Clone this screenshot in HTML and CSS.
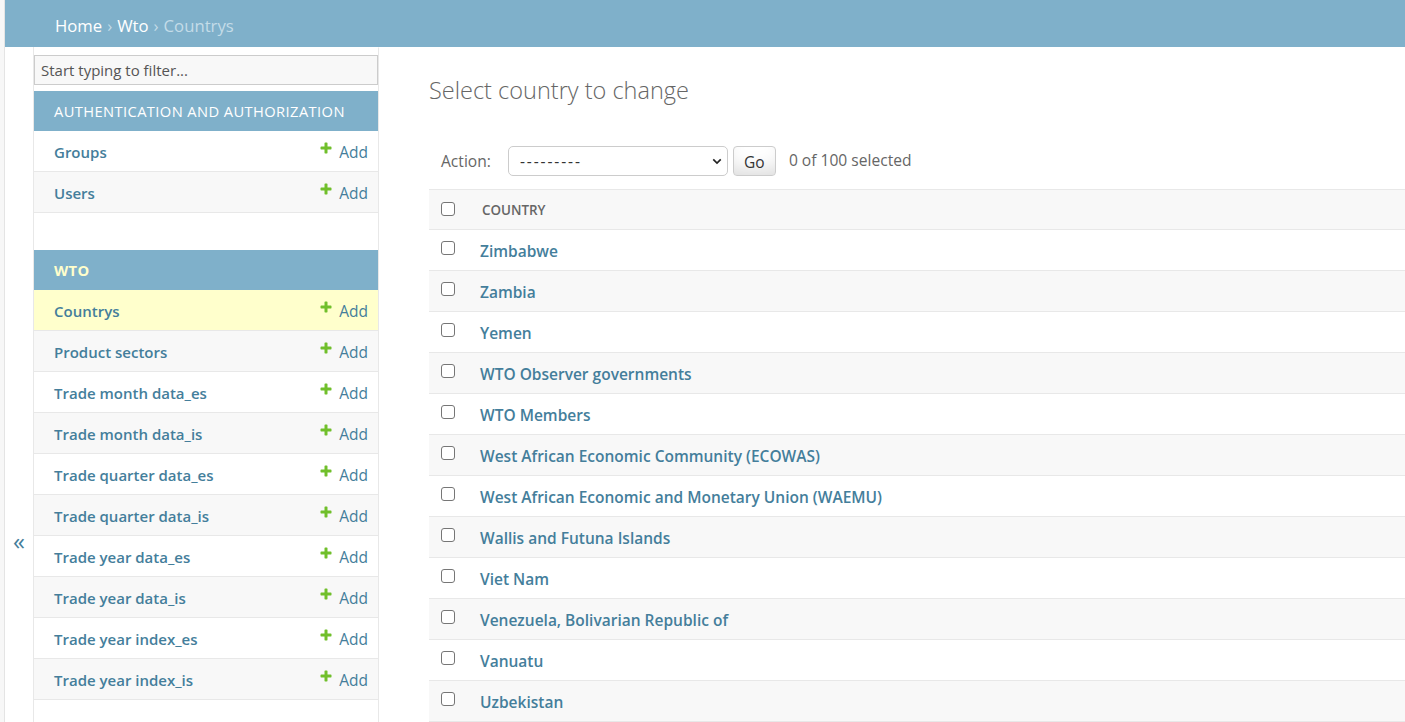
FILE: index.html
```html
<!DOCTYPE html>
<html lang="en">
<head>
<meta charset="utf-8">
<title>Select country to change | Django site admin</title>
<link rel="stylesheet" href="styles.css">
</head>
<body>
<div class="page">
  <nav class="breadcrumbs">
    <a href="#">Home</a><span class="sep">›</span><a href="#">Wto</a><span class="sep">›</span><span>Countrys</span>
  </nav>
  <div class="main">
    <button class="toggle-nav" type="button" aria-label="Toggle navigation">«</button>
    <nav class="sidebar">
      <input class="nav-filter" type="search" placeholder="Start typing to filter...">
      <div class="module">
        <div class="caption">Authentication and Authorization</div>
        <div class="row"><a class="model" href="#">Groups</a><a class="addlink" href="#"><svg viewBox="0 0 1792 1792"><path d="M1600 796v192q0 40-28 68t-68 28h-416v416q0 40-28 68t-68 28h-192q-40 0-68-28t-28-68v-416h-416q-40 0-68-28t-28-68v-192q0-40 28-68t68-28h416v-416q0-40 28-68t68-28h192q40 0 68 28t28 68v416h416q40 0 68 28t28 68z"/></svg>Add</a></div>
        <div class="row alt"><a class="model" href="#">Users</a><a class="addlink" href="#"><svg viewBox="0 0 1792 1792"><path d="M1600 796v192q0 40-28 68t-68 28h-416v416q0 40-28 68t-68 28h-192q-40 0-68-28t-28-68v-416h-416q-40 0-68-28t-28-68v-192q0-40 28-68t68-28h416v-416q0-40 28-68t68-28h192q40 0 68 28t28 68v416h416q40 0 68 28t28 68z"/></svg>Add</a></div>
      </div>
      <div class="module">
        <div class="caption current">WTO</div>
        <div class="row current-model"><a class="model" href="#">Countrys</a><a class="addlink" href="#"><svg viewBox="0 0 1792 1792"><path d="M1600 796v192q0 40-28 68t-68 28h-416v416q0 40-28 68t-68 28h-192q-40 0-68-28t-28-68v-416h-416q-40 0-68-28t-28-68v-192q0-40 28-68t68-28h416v-416q0-40 28-68t68-28h192q40 0 68 28t28 68v416h416q40 0 68 28t28 68z"/></svg>Add</a></div>
        <div class="row alt"><a class="model" href="#">Product sectors</a><a class="addlink" href="#"><svg viewBox="0 0 1792 1792"><path d="M1600 796v192q0 40-28 68t-68 28h-416v416q0 40-28 68t-68 28h-192q-40 0-68-28t-28-68v-416h-416q-40 0-68-28t-28-68v-192q0-40 28-68t68-28h416v-416q0-40 28-68t68-28h192q40 0 68 28t28 68v416h416q40 0 68 28t28 68z"/></svg>Add</a></div>
        <div class="row"><a class="model" href="#">Trade month data_es</a><a class="addlink" href="#"><svg viewBox="0 0 1792 1792"><path d="M1600 796v192q0 40-28 68t-68 28h-416v416q0 40-28 68t-68 28h-192q-40 0-68-28t-28-68v-416h-416q-40 0-68-28t-28-68v-192q0-40 28-68t68-28h416v-416q0-40 28-68t68-28h192q40 0 68 28t28 68v416h416q40 0 68 28t28 68z"/></svg>Add</a></div>
        <div class="row alt"><a class="model" href="#">Trade month data_is</a><a class="addlink" href="#"><svg viewBox="0 0 1792 1792"><path d="M1600 796v192q0 40-28 68t-68 28h-416v416q0 40-28 68t-68 28h-192q-40 0-68-28t-28-68v-416h-416q-40 0-68-28t-28-68v-192q0-40 28-68t68-28h416v-416q0-40 28-68t68-28h192q40 0 68 28t28 68v416h416q40 0 68 28t28 68z"/></svg>Add</a></div>
        <div class="row"><a class="model" href="#">Trade quarter data_es</a><a class="addlink" href="#"><svg viewBox="0 0 1792 1792"><path d="M1600 796v192q0 40-28 68t-68 28h-416v416q0 40-28 68t-68 28h-192q-40 0-68-28t-28-68v-416h-416q-40 0-68-28t-28-68v-192q0-40 28-68t68-28h416v-416q0-40 28-68t68-28h192q40 0 68 28t28 68v416h416q40 0 68 28t28 68z"/></svg>Add</a></div>
        <div class="row alt"><a class="model" href="#">Trade quarter data_is</a><a class="addlink" href="#"><svg viewBox="0 0 1792 1792"><path d="M1600 796v192q0 40-28 68t-68 28h-416v416q0 40-28 68t-68 28h-192q-40 0-68-28t-28-68v-416h-416q-40 0-68-28t-28-68v-192q0-40 28-68t68-28h416v-416q0-40 28-68t68-28h192q40 0 68 28t28 68v416h416q40 0 68 28t28 68z"/></svg>Add</a></div>
        <div class="row"><a class="model" href="#">Trade year data_es</a><a class="addlink" href="#"><svg viewBox="0 0 1792 1792"><path d="M1600 796v192q0 40-28 68t-68 28h-416v416q0 40-28 68t-68 28h-192q-40 0-68-28t-28-68v-416h-416q-40 0-68-28t-28-68v-192q0-40 28-68t68-28h416v-416q0-40 28-68t68-28h192q40 0 68 28t28 68v416h416q40 0 68 28t28 68z"/></svg>Add</a></div>
        <div class="row alt"><a class="model" href="#">Trade year data_is</a><a class="addlink" href="#"><svg viewBox="0 0 1792 1792"><path d="M1600 796v192q0 40-28 68t-68 28h-416v416q0 40-28 68t-68 28h-192q-40 0-68-28t-28-68v-416h-416q-40 0-68-28t-28-68v-192q0-40 28-68t68-28h416v-416q0-40 28-68t68-28h192q40 0 68 28t28 68v416h416q40 0 68 28t28 68z"/></svg>Add</a></div>
        <div class="row"><a class="model" href="#">Trade year index_es</a><a class="addlink" href="#"><svg viewBox="0 0 1792 1792"><path d="M1600 796v192q0 40-28 68t-68 28h-416v416q0 40-28 68t-68 28h-192q-40 0-68-28t-28-68v-416h-416q-40 0-68-28t-28-68v-192q0-40 28-68t68-28h416v-416q0-40 28-68t68-28h192q40 0 68 28t28 68v416h416q40 0 68 28t28 68z"/></svg>Add</a></div>
        <div class="row alt"><a class="model" href="#">Trade year index_is</a><a class="addlink" href="#"><svg viewBox="0 0 1792 1792"><path d="M1600 796v192q0 40-28 68t-68 28h-416v416q0 40-28 68t-68 28h-192q-40 0-68-28t-28-68v-416h-416q-40 0-68-28t-28-68v-192q0-40 28-68t68-28h416v-416q0-40 28-68t68-28h192q40 0 68 28t28 68v416h416q40 0 68 28t28 68z"/></svg>Add</a></div>
      </div>
    </nav>
    <main class="content">
      <h1>Select country to change</h1>
      <div class="actions">
        <label class="action-label">Action:</label>
        <span class="select-wrap">
          <select class="action-select"><option>---------</option><option>Delete selected countrys</option></select>
          <svg class="chevron" viewBox="0 0 12 8"><path d="M1.5 1.5 6 6l4.5-4.5" fill="none" stroke="#222" stroke-width="2"/></svg>
        </span>
        <button class="go" type="button">Go</button>
        <span class="counter">0 of 100 selected</span>
      </div>
      <table class="results">
        <thead>
          <tr><th class="cb"><input type="checkbox"></th><th class="col">Country</th></tr>
        </thead>
        <tbody>
          <tr><td class="cb"><input type="checkbox"></td><th><a href="#">Zimbabwe</a></th></tr>
          <tr class="alt"><td class="cb"><input type="checkbox"></td><th><a href="#">Zambia</a></th></tr>
          <tr><td class="cb"><input type="checkbox"></td><th><a href="#">Yemen</a></th></tr>
          <tr class="alt"><td class="cb"><input type="checkbox"></td><th><a href="#">WTO Observer governments</a></th></tr>
          <tr><td class="cb"><input type="checkbox"></td><th><a href="#">WTO Members</a></th></tr>
          <tr class="alt"><td class="cb"><input type="checkbox"></td><th><a href="#">West African Economic Community (ECOWAS)</a></th></tr>
          <tr><td class="cb"><input type="checkbox"></td><th><a href="#">West African Economic and Monetary Union (WAEMU)</a></th></tr>
          <tr class="alt"><td class="cb"><input type="checkbox"></td><th><a href="#">Wallis and Futuna Islands</a></th></tr>
          <tr><td class="cb"><input type="checkbox"></td><th><a href="#">Viet Nam</a></th></tr>
          <tr class="alt"><td class="cb"><input type="checkbox"></td><th><a href="#">Venezuela, Bolivarian Republic of</a></th></tr>
          <tr><td class="cb"><input type="checkbox"></td><th><a href="#">Vanuatu</a></th></tr>
          <tr class="alt"><td class="cb"><input type="checkbox"></td><th><a href="#">Uzbekistan</a></th></tr>
        </tbody>
      </table>
    </main>
  </div>
</div>
</body>
</html>
```
FILE: styles.css
```css
html {
  overflow: hidden;
}
body {
  margin: 0;
  padding: 0 0 0 4px;
  background: #f7f7f7;
  font-family: "Open Sans", "Noto Sans", "DejaVu Sans", sans-serif;
  color: #333;
  font-size: 15px;
}
a {
  text-decoration: none;
  color: #447e9b;
}
.page {
  background: #fff;
  border-left: 1px solid #e4e4e4;
  min-height: 100vh;
}
.breadcrumbs {
  background: #7fb0ca;
  color: #c4dce8;
  height: 47px;
  box-sizing: border-box;
  padding: 4px 50px 0;
  display: flex;
  align-items: center;
  font-size: 16.7px;
}
.breadcrumbs a {
  color: #fff;
}
.breadcrumbs .sep {
  margin: 0 5px;
}
.main {
  display: flex;
  min-height: calc(100vh - 47px);
}
.toggle-nav {
  flex: 0 0 29px;
  width: 29px;
  box-sizing: border-box;
  border: 0;
  border-right: 1px solid #e8e8e8;
  background: #fff;
  color: #447e9b;
  font-family: "Open Sans", sans-serif;
  font-size: 24px;
  padding: 479px 0 0;
  display: flex;
  justify-content: center;
  align-items: flex-start;
  line-height: 30px;
}
.sidebar {
  flex: 0 0 344px;
  border-right: 1px solid #e8e8e8;
  border-top: 1px solid transparent;
}
.nav-filter {
  display: block;
  width: 100%;
  box-sizing: border-box;
  height: 30px;
  margin: 7px 0 6px;
  padding: 2px 6px;
  border: 1px solid #ccc;
  background: #f8f8f8;
  color: #333;
  font-family: inherit;
  font-size: 15px;
  outline: none;
}
.nav-filter::placeholder {
  color: #555;
}
.module {
  margin-bottom: 37px;
}
.caption {
  background: #7fb0ca;
  color: #fff;
  text-transform: uppercase;
  letter-spacing: 0.4px;
  font-size: 14.7px;
  line-height: 20px;
  padding: 10px 20px;
}
.caption.current {
  color: #ffc;
  font-weight: 700;
}
.row {
  display: flex;
  justify-content: space-between;
  align-items: flex-start;
  padding: 11px 10px 9px 20px;
  line-height: 20px;
  border-bottom: 1px solid #e8e8e8;
  background: #fff;
}
.row.alt {
  background: #f8f8f8;
}
.row.current-model {
  background: #ffc;
}
.model {
  font-weight: 600;
}
.addlink {
  display: flex;
  align-items: flex-start;
  gap: 6px;
  font-size: 15.5px;
}
.addlink svg {
  width: 14px;
  height: 14px;
  fill: #70bf2b;
  margin-top: -1px;
}
.content {
  flex: 1;
  padding: 25px 0 0 50px;
  min-width: 0;
}
h1 {
  margin: 0 0 25px;
  font-weight: 300;
  font-size: 23.5px;
  line-height: 37px;
  color: #666;
}
.actions {
  display: flex;
  align-items: center;
  padding: 12px 12px 13px;
  height: 30px;
  color: #666;
}
.action-label {
  font-size: 15.6px;
  margin-right: 17px;
}
.select-wrap {
  position: relative;
  display: block;
  width: 220px;
  height: 30px;
}
.action-select {
  appearance: none;
  -webkit-appearance: none;
  width: 100%;
  height: 30px;
  border: 1px solid #ccc;
  border-radius: 5px;
  background: #fff;
  color: #333;
  padding: 0 0 0 11px;
  font-family: inherit;
  font-size: 15.5px;
  letter-spacing: 1.9px;
}
.chevron {
  position: absolute;
  right: 6px;
  top: 12px;
  width: 10px;
  height: 7px;
  pointer-events: none;
}
.go {
  margin-left: 5px;
  height: 30px;
  width: 43px;
  padding: 2px 0 0;
  border: 1px solid #ccc;
  border-radius: 4px;
  background: #fff;
  box-shadow: 0 -15px 20px -10px rgba(0, 0, 0, 0.15) inset;
  color: #333;
  font-family: inherit;
  font-size: 15.5px;
  line-height: 26px;
}
.counter {
  margin-left: 13px;
  font-size: 15.6px;
  margin-top: -3px;
}
.results {
  width: 100%;
  border-collapse: collapse;
}
.results thead th {
  background: #f8f8f8;
  border-top: 1px solid #e8e8e8;
  border-bottom: 1px solid #e8e8e8;
  height: 39px;
  padding: 0;
  text-align: left;
  vertical-align: middle;
}
.results th.col {
  padding: 0 12px;
  font-size: 13.4px;
  font-weight: 600;
  text-transform: uppercase;
  color: #666;
}
.results .cb {
  width: 41px;
  box-sizing: border-box;
  padding: 0 0 0 12px;
  text-align: left;
}
.results thead .cb input {
  margin-top: -2px;
}
.results tbody td,
.results tbody th {
  padding: 10px;
  line-height: 20px;
  border-bottom: 1px solid #e8e8e8;
  text-align: left;
  vertical-align: top;
  font-weight: 600;
  font-size: 15.5px;
}
.results tbody th {
  padding: 11px 10px 9px;
}
.results tbody td.cb {
  padding: 10px 0 10px 12px;
}
.results tbody tr.alt {
  background: #f8f8f8;
}
.results input[type="checkbox"] {
  appearance: none;
  -webkit-appearance: none;
  display: block;
  width: 14px;
  height: 14px;
  margin: 1px 0 0;
  border: 1px solid #767676;
  border-radius: 3px;
  background: #fff;
  box-sizing: border-box;
}
```
